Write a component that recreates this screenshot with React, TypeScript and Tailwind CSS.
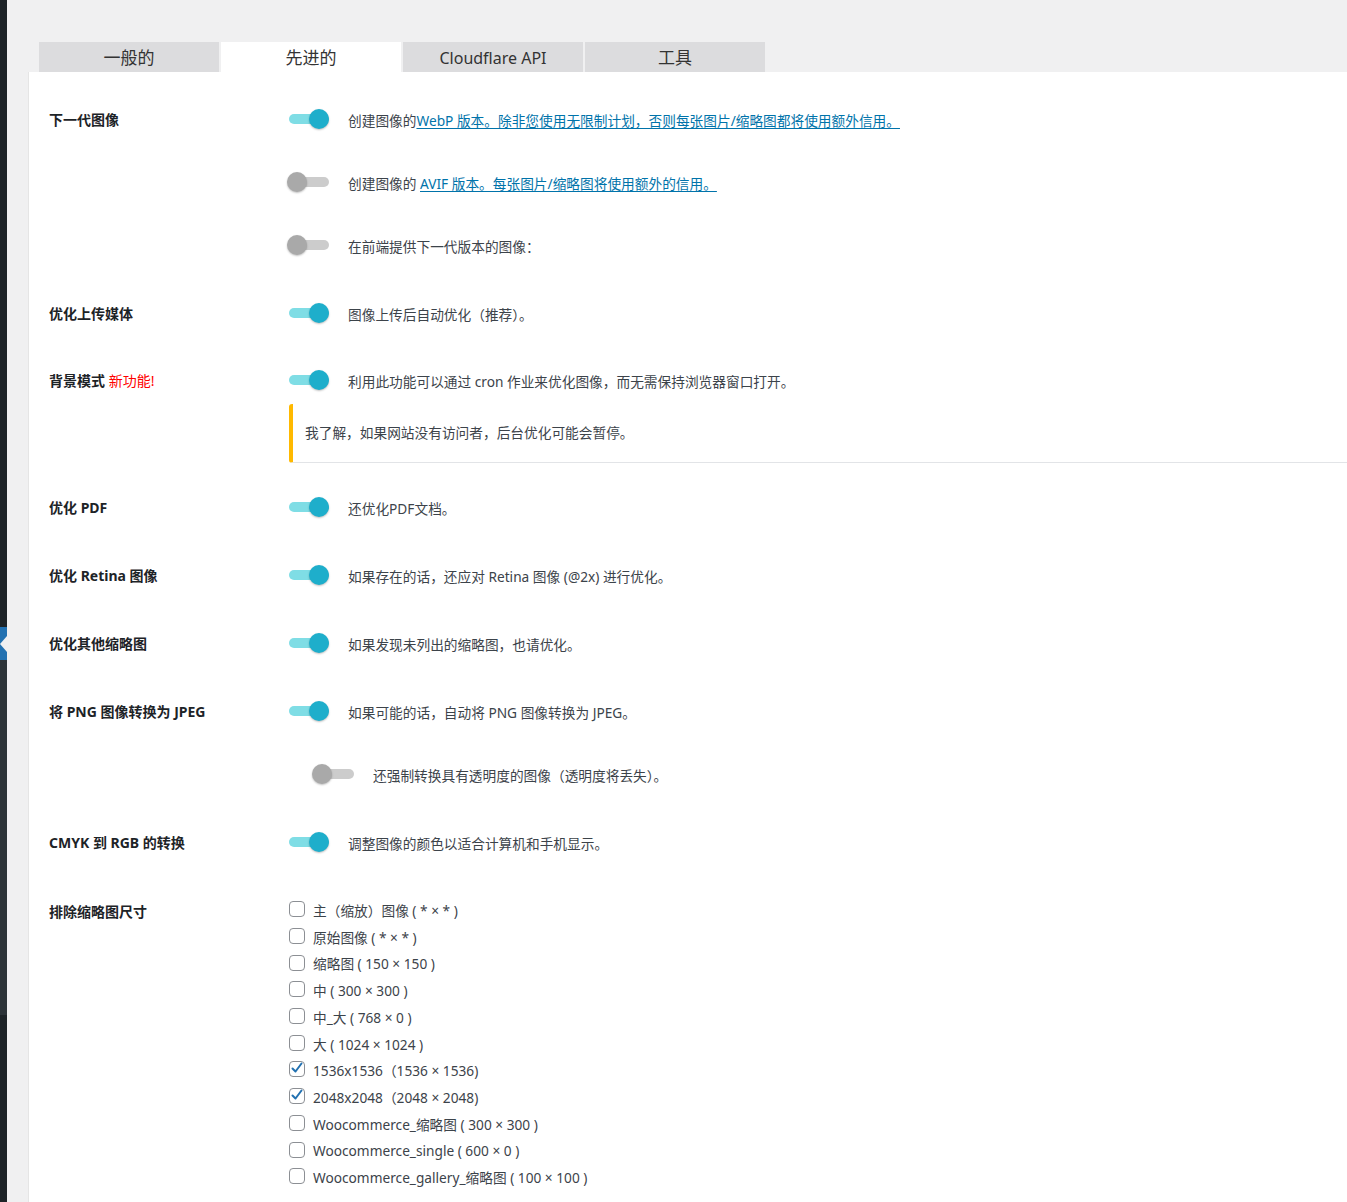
import React from "react";

const TABS = ["一般的", "先进的", "Cloudflare API", "工具"];

const SIZES: { label: string; checked?: boolean }[] = [
  { label: "主（缩放）图像 ( * × * )" },
  { label: "原始图像 ( * × * )" },
  { label: "缩略图 ( 150 × 150 )" },
  { label: "中 ( 300 × 300 )" },
  { label: "中_大 ( 768 × 0 )" },
  { label: "大 ( 1024 × 1024 )" },
  { label: "1536x1536（1536 × 1536)", checked: true },
  { label: "2048x2048（2048 × 2048)", checked: true },
  { label: "Woocommerce_缩略图 ( 300 × 300 )" },
  { label: "Woocommerce_single ( 600 × 0 )" },
  { label: "Woocommerce_gallery_缩略图 ( 100 × 100 )" },
];

function Toggle({ on }: { on: boolean }) {
  return (
    <div className="relative w-[40px] h-[20px] shrink-0">
      <div
        className={`absolute left-0 right-0 top-[5px] h-[10px] rounded-full ${
          on ? "bg-[#7fdde5]" : "bg-[#cccccc]"
        }`}
      />
      <div
        className={`absolute top-0 w-[20px] h-[20px] rounded-full shadow-[0_1px_2px_rgba(0,0,0,0.25)] ${
          on ? "right-0 bg-[#1eaecb]" : "left-[-2px] bg-[#a9a9a9]"
        }`}
      />
    </div>
  );
}

function ToggleLine({
  on,
  children,
  className = "",
}: {
  on: boolean;
  children: React.ReactNode;
  className?: string;
}) {
  return (
    <div className={`flex items-center h-[24px] ${className}`}>
      <Toggle on={on} />
      <div className="ml-[19px] text-[13.7px] text-[#3c434a] whitespace-nowrap translate-y-[2px]">
        {children}
      </div>
    </div>
  );
}

function Row({
  label,
  children,
  className = "",
  labelClass = "",
}: {
  label: React.ReactNode;
  children: React.ReactNode;
  className?: string;
  labelClass?: string;
}) {
  return (
    <div className={`flex ${className}`}>
      <div
        className={`w-[240px] shrink-0 h-[24px] flex items-center text-[14px] font-bold text-[#1d2327] ${labelClass}`}
      >
        {label}
      </div>
      <div className="flex-1 flex flex-col">{children}</div>
    </div>
  );
}

function Checkbox({ checked }: { checked?: boolean }) {
  return (
    <div className="relative w-[16px] h-[16px] rounded-[4px] border border-[#8c8f94] bg-white shrink-0">
      {checked && (
        <svg viewBox="0 0 16 16" className="absolute left-[-1px] top-[-2px] w-[16px] h-[16px]">
          <path
            d="M3.5 8.5 L6.5 11.5 L12.5 3.5"
            fill="none"
            stroke="#2271b1"
            strokeWidth="2"
            strokeLinecap="round"
            strokeLinejoin="round"
          />
        </svg>
      )}
    </div>
  );
}

export default function App() {
  return (
    <div
      className="flex min-h-[1202px] bg-[#f0f0f1]"
      style={{ fontFamily: '"Noto Sans", "Noto Sans CJK SC", sans-serif' }}
    >
      {/* admin sidebar edge */}
      <div className="w-[7px] shrink-0 flex flex-col bg-[#1d2327]">
        <div className="h-[627px]" />
        <div className="relative h-[33px] bg-[#2271b1]">
          <div className="absolute left-0 top-[9px] w-0 h-0 border-y-[8px] border-y-transparent border-r-[7px] border-r-[#f0f0f1]" />
        </div>
        <div className="h-[355px] bg-[#2c3338]" />
        <div className="flex-1" />
      </div>

      <main className="flex-1 pl-[22px] pt-[42px]">
        {/* Tabs */}
        <div className="flex gap-[2px] ml-[10px]">
          {TABS.map((t, i) => (
            <div
              key={t}
              className={`w-[180px] h-[30px] flex items-center justify-center text-[#333] ${
                i === 2 ? "text-[16px]" : "text-[17px]"
              } ${i === 1 ? "bg-white" : "bg-[#dcdcde]"}`}
            >
              <span className="translate-y-[1px]">{t}</span>
            </div>
          ))}
        </div>

        {/* Panel */}
        <div className="bg-white pl-[20px] pt-[35px] pb-[20px] min-h-[1130px] shadow-[-1px_0_0_#e5e5e5]">
          <Row label="下一代图像">
            <ToggleLine on>
              创建图像的
              <a className="text-[#0073aa] underline underline-offset-2">
                WebP 版本。除非您使用无限制计划，否则每张图片/缩略图都将使用额外信用。
              </a>
            </ToggleLine>
            <ToggleLine on={false} className="mt-[39px]">
              创建图像的{" "}
              <a className="text-[#0073aa] underline underline-offset-2">
                AVIF 版本。每张图片/缩略图将使用额外的信用。
              </a>
            </ToggleLine>
            <ToggleLine on={false} className="mt-[39px]">
              在前端提供下一代版本的图像：
            </ToggleLine>
          </Row>

          <Row label="优化上传媒体" className="mt-[44px]">
            <ToggleLine on>图像上传后自动优化（推荐）。</ToggleLine>
          </Row>

          <Row
            label={
              <span>
                背景模式 <span className="text-[#ff0000] font-normal">新功能!</span>
              </span>
            }
            className="mt-[43px]"
          >
            <ToggleLine on>利用此功能可以通过 cron 作业来优化图像，而无需保持浏览器窗口打开。</ToggleLine>
            <div className="mt-[12px] h-[59px] flex items-center border-l-4 border-[#ffb900] rounded-l-[3px] border-b border-b-[#e2e4e7] pl-[12px] text-[13.7px] text-[#3c434a]">
              我了解，如果网站没有访问者，后台优化可能会暂停。
            </div>
          </Row>

          <Row label="优化 PDF" className="mt-[32px]">
            <ToggleLine on>还优化PDF文档。</ToggleLine>
          </Row>

          <Row label="优化 Retina 图像" className="mt-[44px]">
            <ToggleLine on>如果存在的话，还应对 Retina 图像 (@2x) 进行优化。</ToggleLine>
          </Row>

          <Row label="优化其他缩略图" className="mt-[44px]">
            <ToggleLine on>如果发现未列出的缩略图，也请优化。</ToggleLine>
          </Row>

          <Row label="将 PNG 图像转换为 JPEG" className="mt-[44px]">
            <ToggleLine on>如果可能的话，自动将 PNG 图像转换为 JPEG。</ToggleLine>
            <ToggleLine on={false} className="mt-[39px] ml-[25px]">
              还强制转换具有透明度的图像（透明度将丢失）。
            </ToggleLine>
          </Row>

          <Row label="CMYK 到 RGB 的转换" className="mt-[44px]">
            <ToggleLine on>调整图像的颜色以适合计算机和手机显示。</ToggleLine>
          </Row>

          <Row label="排除缩略图尺寸" className="mt-[42px]" labelClass="translate-y-[3px]">
            <div className="flex flex-col">
              {SIZES.map((s) => (
                <div key={s.label} className="flex items-center h-[26.7px]">
                  <Checkbox checked={s.checked} />
                  <span className="ml-[8px] text-[13.7px] text-[#3c434a] translate-y-[2px]">{s.label}</span>
                </div>
              ))}
            </div>
          </Row>
        </div>
      </main>
    </div>
  );
}
